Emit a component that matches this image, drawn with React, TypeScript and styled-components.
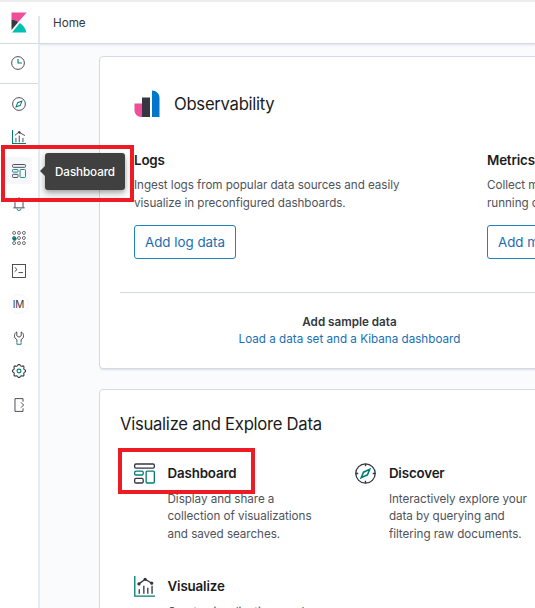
import React from 'react';
import styled, { createGlobalStyle } from 'styled-components';

const INK = '#343741';
const TEAL = '#017d73';

const GlobalStyle = createGlobalStyle`
  * { box-sizing: border-box; }
  body { margin: 0; overflow: hidden; background: #fafbfd; font-family: Inter, "Liberation Sans", sans-serif; color: ${INK}; }
  h2, h3, p { margin: 0; }
  svg { display: block; flex: none; }
`;

const Page = styled.div`
  position: relative;
  width: 535px;
  height: 608px;
  overflow: hidden;
  display: flex;
  flex-direction: column;
`;

const Header = styled.header`
  flex: none;
  height: 44px;
  display: flex;
  background: #fff;
  border-top: 2px solid #ededed;
  border-bottom: 1px solid #d3dae6;
  box-shadow: 0 1px 2px rgba(152, 162, 179, 0.3);
`;

const LogoCell = styled.div`
  width: 38px;
  padding: 9.5px 0 0 10.5px;
`;

const Breadcrumb = styled.div`
  margin-top: 14px;
  height: 27px;
  padding-left: 13px;
  border-left: 2px solid #e2e6ee;
  font-size: 11.67px;
  line-height: 14px;
  color: ${INK};
`;

const Body = styled.div`
  flex: 1;
  min-height: 0;
  display: flex;
`;

const Rail = styled.nav`
  flex: none;
  width: 40px;
  background: #fff;
  border-right: 2px solid #e6eaf1;
`;

const RecentCell = styled.div`
  height: 40px;
  width: 38px;
  display: flex;
  align-items: center;
  justify-content: center;
  padding: 0 2px 1px 0;
  border-bottom: 1px solid #d3dae6;
`;

const RailList = styled.div`
  padding: 6.5px 1px 0 0;
  display: flex;
  flex-direction: column;
  align-items: center;
  gap: 6.4px;
`;

const RailItem = styled.div<{ $active?: boolean }>`
  width: 27px;
  height: 27px;
  display: flex;
  align-items: center;
  justify-content: center;
  border-radius: 3px;
  background: ${p => (p.$active ? '#f5f7fa' : 'transparent')};
`;

const Avatar = styled.div`
  width: 20px;
  height: 20px;
  border: 1px solid #f5f5f7;
  border-radius: 50%;
  display: flex;
  align-items: center;
  justify-content: center;
  font-size: 10px;
  color: ${INK};
`;

const Main = styled.main`
  flex: none;
  width: 1000px;
  padding: 12px 0 0 59px;
  display: flex;
  flex-direction: column;
  gap: 20px;
`;

const Panel = styled.section<{ $height: number }>`
  flex: none;
  height: ${p => p.$height}px;
  background: #fff;
  border: 1px solid #d3dae6;
  border-radius: 4px;
  box-shadow: 0 2px 2px -1px rgba(152, 162, 179, 0.35);
  padding: 0 20px;
`;

const SolutionHead = styled.div`
  display: flex;
  align-items: center;
  gap: 14px;
  height: 30px;
  margin: 32px 0 0 14px;
`;

const Title = styled.h2`
  font-size: 16.67px;
  line-height: 24px;
  font-weight: 400;
  letter-spacing: -0.28px;
  color: #1a1c21;
`;

const SolutionGrid = styled.div`
  display: grid;
  grid-template-columns: 353px 353px;
  margin: 31px 0 0 14px;
`;

const ItemTitle = styled.h3`
  font-size: 13.33px;
  line-height: 20px;
  font-weight: 600;
  letter-spacing: -0.15px;
  color: #1a1c21;
`;

const Copy = styled.p`
  font-size: 11.67px;
  line-height: 17.5px;
  letter-spacing: -0.05px;
  color: #50535c;
  white-space: pre-line;
`;

const SolutionCopy = styled(Copy)`
  margin-top: 7px;
`;

const Button = styled.button`
  margin-top: 13px;
  height: 34px;
  padding: 0 10px;
  background: #fff;
  border: 1px solid #2181c0;
  border-radius: 3px;
  color: #1a6cb0;
  font: 400 13.33px/20px Inter, sans-serif;
  white-space: nowrap;
`;

const Sample = styled.div`
  margin-top: 33px;
  padding-top: 20.5px;
  border-top: 1px solid #d3dae6;
`;

const SampleText = styled.div`
  width: 459px;
  text-align: center;
  font-size: 11.67px;
  line-height: 17.5px;
`;

const SampleTitle = styled.div`
  font-weight: 600;
`;

const Link = styled.span`
  color: #1a70b5;
`;

const FeatureTitle = styled(Title)`
  margin-top: 22px;
`;

const FeatureGrid = styled.div`
  display: grid;
  grid-template-columns: 187px 187px;
  column-gap: 34.4px;
  row-gap: 33px;
  margin: 27px 0 0 14px;
`;

const Feature = styled.div`
  display: grid;
  grid-template-columns: 21px 1fr;
  column-gap: 12.5px;
`;

const FeatureCopy = styled(Copy)`
  margin-top: 7.5px;
`;

const Tooltip = styled.div`
  position: absolute;
  left: 45px;
  top: 153px;
  width: 80px;
  height: 37px;
  display: flex;
  align-items: center;
  justify-content: center;
  background: #404040;
  border-radius: 3px;
  color: #fff;
  font-size: 11.67px;
  font-weight: 500;
  letter-spacing: -0.1px;
  box-shadow: 0 5px 10px rgba(0, 0, 0, 0.16), 0 2px 4px rgba(0, 0, 0, 0.25);
  &::before {
    content: '';
    position: absolute;
    left: -5px;
    top: 13px;
    border: 5px solid transparent;
    border-left: 0;
    border-right: 5px solid #404040;
  }
`;

const Marker = styled.div<{ $x: number; $y: number; $w: number; $h: number }>`
  position: absolute;
  left: ${p => p.$x}px;
  top: ${p => p.$y}px;
  width: ${p => p.$w}px;
  height: ${p => p.$h}px;
  border: 4px solid #ed1c24;
`;

type IconProps = { size?: number; children: React.ReactNode };

const Icon = ({ size = 14, children }: IconProps) => (
  <svg width={size} height={size} viewBox="0 0 16 16" fill="none" stroke={INK} strokeWidth={1}>
    {children}
  </svg>
);

const BigIcon = ({ children }: { children: React.ReactNode }) => (
  <svg width={21} height={21} viewBox="0 0 32 32" fill="none" stroke={INK} strokeWidth={2}>
    {children}
  </svg>
);

const ClockIcon = () => (
  <Icon>
    <circle cx="8" cy="8" r="7.3" />
    <path d="M8 3.5V8h4.5" stroke={TEAL} strokeWidth="1.3" />
  </Icon>
);

const CompassIcon = () => (
  <Icon>
    <circle cx="8" cy="8" r="7.3" />
    <path d="M11.3 4.7 9.5 9.5 4.7 11.3 6.5 6.5Z" stroke={TEAL} strokeWidth="1.2" />
  </Icon>
);

const ChartIcon = () => (
  <Icon>
    <path d="M.6 0v15.4H16" stroke={TEAL} strokeWidth="1.2" />
    <path d="M3.2 6.2 7.5 2.8l2.7 1L14.8 6.4M4.5 9v5M8.3 6.5V14M12.5 9v5" />
    <circle cx="8.4" cy="2.7" r="1" fill={INK} />
  </Icon>
);

const DashboardIcon = () => (
  <Icon>
    <rect x=".6" y=".6" width="14.8" height="3.2" rx="1" />
    <rect x=".6" y="6.3" width="6.3" height="3" rx="1" stroke={TEAL} />
    <rect x=".6" y="11.8" width="6.3" height="3.6" rx="1" />
    <rect x="9.2" y="6.3" width="6.2" height="9.1" rx="1" stroke={TEAL} />
  </Icon>
);

const BellIcon = () => (
  <Icon>
    <path d="M1.5 12.4h13M3.4 12V6.2a4.6 4.6 0 0 1 9.2 0V12M8 .2v1.4" />
    <path d="M5.7 13.2a2.3 2.3 0 0 0 4.6 0" stroke={TEAL} />
  </Icon>
);

const MlIcon = () => (
  <Icon>
    {[2.2, 8, 13.8].map(y =>
      [2.4, 8, 13.6].map(x => <circle key={`${x}-${y}`} cx={x} cy={y} r="1.7" strokeWidth=".8" />)
    )}
    <circle cx="2.9" cy="8.9" r="1.9" fill={TEAL} stroke={TEAL} />
  </Icon>
);

const ConsoleIcon = () => (
  <Icon>
    <rect x=".6" y=".6" width="14.8" height="14.8" />
    <path d="m3 3.8 2.8 2.5L3 8.8M7.4 9.8h5.2" />
  </Icon>
);

const WrenchIcon = () => (
  <Icon>
    <path d="M5.6 13V9.8C3.7 8.8 2.8 7.3 2.8 5.4c0-2 1.1-3.6 2.7-4.3v4.4L8 7l2.5-1.5V1.1c1.6.7 2.7 2.3 2.7 4.3 0 1.9-.9 3.4-2.8 4.4V13" />
    <path d="M5.6 13.3v1.9h4.8v-1.9" stroke={TEAL} />
  </Icon>
);

const gearPath = Array.from({ length: 32 }, (_, i) => {
  const radius = i % 4 < 2 ? 7.5 : 6.1;
  const angle = ((i - 0.5) / 32) * Math.PI * 2;
  return `${i ? 'L' : 'M'}${(8 + radius * Math.cos(angle)).toFixed(2)} ${(8 + radius * Math.sin(angle)).toFixed(2)}`;
}).join('') + 'Z';

const GearIcon = () => (
  <Icon>
    <path d={gearPath} strokeWidth="1.2" />
    <circle cx="8" cy="8" r="2.2" stroke={TEAL} strokeWidth="1.3" />
  </Icon>
);

const ExitIcon = () => (
  <Icon>
    <path d="M12.6 4.2V.7H3.4v14.6h9.2v-3.5M10.3 5l3 3-3 3" />
  </Icon>
);

const KibanaLogo = () => (
  <svg width="16" height="21" viewBox="0 0 16 21">
    <path d="M.5.5H15.7L7.3 10C5.3 8.5 3 7.7.5 7.7Z" fill="#f04e98" />
    <path d="M.5 7.7c2.5 0 4.8.8 6.8 2.3L.5 18Z" fill={INK} />
    <path d="M8.8 11.1c3.3 2.1 5.8 5.4 6.6 9.4H1Z" fill="#00bfb3" />
  </svg>
);

const ObservabilityLogo = () => (
  <svg width="26" height="28" viewBox="0 0 26 28">
    <path d="M.5 13.5h8V27H7A6.5 6.5 0 0 1 .5 20.5Z" fill="#f04e98" />
    <path d="M8 7.5h8V27H8Z" fill={INK} />
    <path d="M18 .5c4.4 0 7.5 3.4 7.5 7.5V27H18Z" fill="#0077cc" />
  </svg>
);

const BigDashboardIcon = () => (
  <BigIcon>
    <rect x="1" y="1.5" width="30" height="6.3" rx="2" />
    <rect x="1" y="12.3" width="13" height="6" rx="2" stroke={TEAL} />
    <rect x="1" y="23.5" width="13" height="7" rx="2" />
    <rect x="18.5" y="12.3" width="12.5" height="18.2" rx="1.5" stroke={TEAL} />
  </BigIcon>
);

const BigCompassIcon = () => (
  <BigIcon>
    <circle cx="16" cy="16" r="14.8" />
    <path d="M16 1v4M16 27v4M1 16h4M27 16h4" />
    <path d="M22.5 9.5 19 18l-9.5 4.5L13 14Z" stroke={TEAL} strokeWidth="2.4" />
  </BigIcon>
);

const BigChartIcon = () => (
  <BigIcon>
    <path d="M1.2 0v30.8H32" stroke={TEAL} />
    <path d="m7.5 12 9.5-7 10 6M8 20v7M15 15v12M21 18v9M27.5 15v12" />
    <circle cx="7.5" cy="12" r="1.5" fill={INK} />
    <circle cx="17" cy="5" r="1.5" fill={INK} />
    <circle cx="27" cy="11" r="1.5" fill={INK} />
  </BigIcon>
);

const solutions = [
  {
    title: 'Logs',
    copy: 'Ingest logs from popular data sources and easily\nvisualize in preconfigured dashboards.',
    action: 'Add log data',
  },
  {
    title: 'Metrics',
    copy: 'Collect metrics from the operating system and services\nrunning on your servers.',
    action: 'Add metric data',
  },
];

const features = [
  { title: 'Dashboard', icon: <BigDashboardIcon />, copy: 'Display and share a\ncollection of visualizations\nand saved searches.' },
  { title: 'Discover', icon: <BigCompassIcon />, copy: 'Interactively explore your\ndata by querying and\nfiltering raw documents.' },
  { title: 'Visualize', icon: <BigChartIcon />, copy: 'Create visualizations and' },
];

export default function App() {
  return (
    <>
      <GlobalStyle />
      <Page>
        <Header>
          <LogoCell><KibanaLogo /></LogoCell>
          <Breadcrumb>Home</Breadcrumb>
        </Header>
        <Body>
          <Rail>
            <RecentCell><ClockIcon /></RecentCell>
            <RailList>
              <RailItem><CompassIcon /></RailItem>
              <RailItem><ChartIcon /></RailItem>
              <RailItem $active><DashboardIcon /></RailItem>
              <RailItem><BellIcon /></RailItem>
              <RailItem><MlIcon /></RailItem>
              <RailItem><ConsoleIcon /></RailItem>
              <RailItem><Avatar>IM</Avatar></RailItem>
              <RailItem><WrenchIcon /></RailItem>
              <RailItem><GearIcon /></RailItem>
              <RailItem><ExitIcon /></RailItem>
            </RailList>
          </Rail>
          <Main>
            <Panel $height={313}>
              <SolutionHead>
                <ObservabilityLogo />
                <Title>Observability</Title>
              </SolutionHead>
              <SolutionGrid>
                {solutions.map(s => (
                  <div key={s.title}>
                    <ItemTitle>{s.title}</ItemTitle>
                    <SolutionCopy>{s.copy}</SolutionCopy>
                    <Button>{s.action}</Button>
                  </div>
                ))}
              </SolutionGrid>
              <Sample>
                <SampleText>
                  <SampleTitle>Add sample data</SampleTitle>
                  <Link>Load a data set and a Kibana dashboard</Link>
                </SampleText>
              </Sample>
            </Panel>
            <Panel $height={400}>
              <FeatureTitle>Visualize and Explore Data</FeatureTitle>
              <FeatureGrid>
                {features.map(f => (
                  <Feature key={f.title}>
                    {f.icon}
                    <div>
                      <ItemTitle>{f.title}</ItemTitle>
                      <FeatureCopy>{f.copy}</FeatureCopy>
                    </div>
                  </Feature>
                ))}
              </FeatureGrid>
            </Panel>
          </Main>
        </Body>
        <Tooltip>Dashboard</Tooltip>
        <Marker $x={1} $y={145} $w={133} $h={57} />
        <Marker $x={118} $y={448} $w={137} $h={46} />
      </Page>
    </>
  );
}
